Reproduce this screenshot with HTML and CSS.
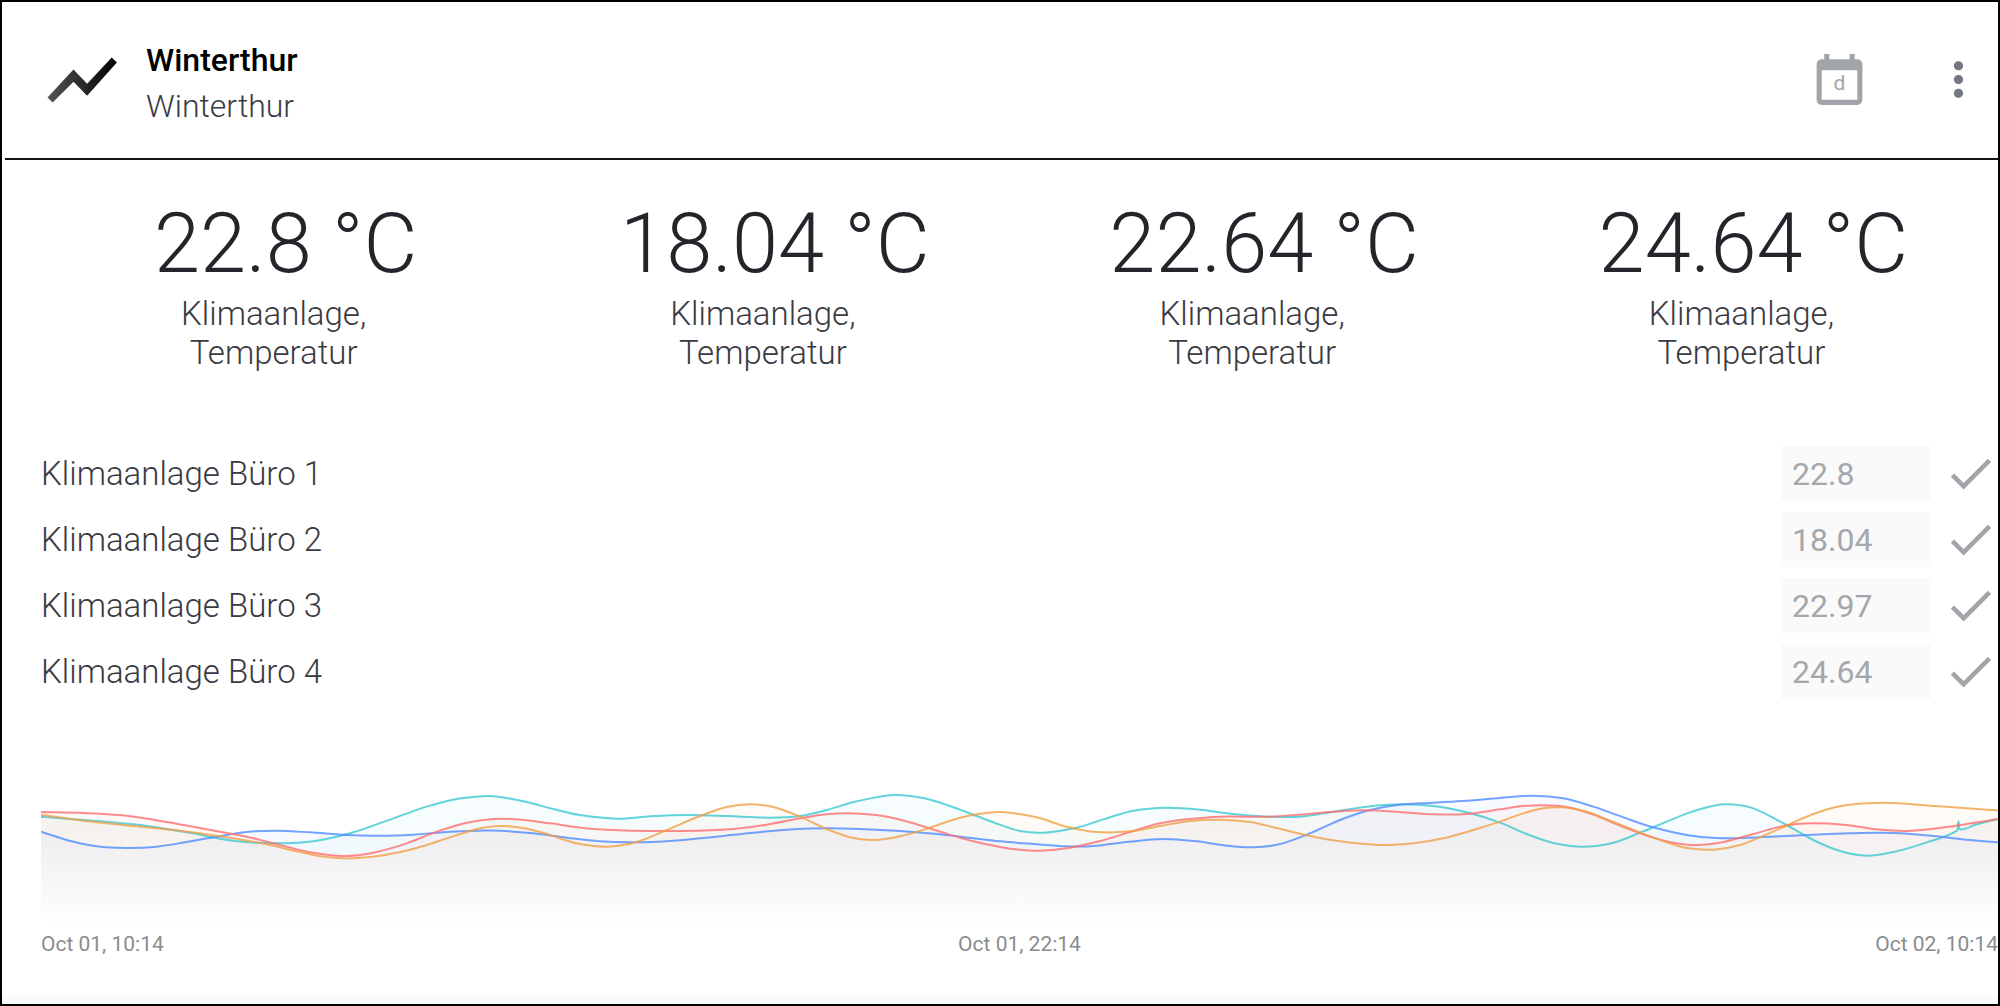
FILE: index.html
```html
<!DOCTYPE html>
<html lang="de">
<head>
    <meta charset="UTF-8">
    <meta name="viewport" content="width=device-width, initial-scale=1.0">
    <title>Winterthur</title>
    <link rel="stylesheet" href="styles.css">
</head>
<body>
    <div class="card">
        <header class="card-header">
            <svg class="icon-trend" viewBox="0 0 24 24" aria-hidden="true">
                <defs>
                    <linearGradient id="trendGradient" x1="0" y1="0" x2="1" y2="0">
                        <stop offset="0" stop-color="#555"/>
                        <stop offset="1" stop-color="#000"/>
                    </linearGradient>
                </defs>
                <path fill="url(#trendGradient)" d="M3.400 18.600l6.100-6.100 4 4.100L22.200 6.900l-1.500-1.500-7.200 7.700-4-4.200L1.900 17.100z"/>
            </svg>
            <div class="titles">
                <h1>Winterthur</h1>
                <p>Winterthur</p>
            </div>
            <button type="button" class="icon-button calendar" aria-label="Tag">
                <svg viewBox="0 0 24 24" aria-hidden="true">
                    <path d="M19 4h-1V2h-2v2H8V2H6v2H5c-1.11 0-1.99.9-1.99 2L3 20a2 2 0 002 2h14c1.1 0 2-.9 2-2V6c0-1.1-.9-2-2-2zm0 16H5V8.400h14V20z"/>
                </svg>
                <span class="calendar-unit">d</span>
            </button>
            <button type="button" class="icon-button more" aria-label="Menü">
                <svg viewBox="0 0 24 24" aria-hidden="true">
                    <path d="M12 8c1.100 0 2-.9 2-2s-.9-2-2-2-2 .9-2 2 .9 2 2 2zm0 2c-1.100 0-2 .9-2 2s.9 2 2 2 2-.9 2-2-.9-2-2-2zm0 6c-1.100 0-2 .9-2 2s.9 2 2 2 2-.9 2-2-.9-2-2-2z"/>
                </svg>
            </button>
        </header>

        <main class="card-body">
            <section class="values">
                <div class="value">
                    <strong>22.8 °C</strong>
                    <span>Klimaanlage,<br>Temperatur</span>
                </div>
                <div class="value">
                    <strong>18.04 °C</strong>
                    <span>Klimaanlage,<br>Temperatur</span>
                </div>
                <div class="value">
                    <strong>22.64 °C</strong>
                    <span>Klimaanlage,<br>Temperatur</span>
                </div>
                <div class="value">
                    <strong>24.64 °C</strong>
                    <span>Klimaanlage,<br>Temperatur</span>
                </div>
            </section>

            <form class="controls">
                <div class="control">
                    <label for="buero1">Klimaanlage Büro 1</label>
                    <input type="text" id="buero1" value="22.8">
                    <button type="button" class="icon-button check" aria-label="Büro 1 setzen">
                        <svg viewBox="0 0 24 24" aria-hidden="true"><path d="M9 16.170L4.830 12l-1.420 1.410L9 19 21 7l-1.410-1.410z"/></svg>
                    </button>
                </div>
                <div class="control">
                    <label for="buero2">Klimaanlage Büro 2</label>
                    <input type="text" id="buero2" value="18.04">
                    <button type="button" class="icon-button check" aria-label="Büro 2 setzen">
                        <svg viewBox="0 0 24 24" aria-hidden="true"><path d="M9 16.170L4.830 12l-1.420 1.410L9 19 21 7l-1.410-1.410z"/></svg>
                    </button>
                </div>
                <div class="control">
                    <label for="buero3">Klimaanlage Büro 3</label>
                    <input type="text" id="buero3" value="22.97">
                    <button type="button" class="icon-button check" aria-label="Büro 3 setzen">
                        <svg viewBox="0 0 24 24" aria-hidden="true"><path d="M9 16.170L4.830 12l-1.420 1.410L9 19 21 7l-1.410-1.410z"/></svg>
                    </button>
                </div>
                <div class="control">
                    <label for="buero4">Klimaanlage Büro 4</label>
                    <input type="text" id="buero4" value="24.64">
                    <button type="button" class="icon-button check" aria-label="Büro 4 setzen">
                        <svg viewBox="0 0 24 24" aria-hidden="true"><path d="M9 16.170L4.830 12l-1.420 1.410L9 19 21 7l-1.410-1.410z"/></svg>
                    </button>
                </div>
            </form>

            <section class="history">
                <svg id="chart" class="chart" viewBox="123 30 5871 408" preserveAspectRatio="none" role="img" aria-label="Temperaturverlauf"></svg>
                <div class="axis">
                    <span>Oct 01, 10:14</span>
                    <span>Oct 01, 22:14</span>
                    <span>Oct 02, 10:14</span>
                </div>
            </section>
        </main>
    </div>
    <script src="chart.js"></script>
</body>
</html>
```
FILE: styles.css
```css
* {
    box-sizing: border-box;
}
body {
    margin: 0;
    background: #fafafa;
    color: #3a3a42;
    font-family: Roboto, "Liberation Sans", sans-serif;
    font-size: 33px;
    font-weight: 300;
}
.card {
    display: flex;
    flex-direction: column;
    min-height: 100vh;
    border: 2px solid #000;
    padding-bottom: 9px;
}
.card-header {
    display: flex;
    align-items: center;
    height: 158px;
    margin-left: 3px;
    padding: 0 12px 1px 36px;
    background: #fff;
    border-bottom: 2px solid #15101a;
    box-shadow: -3px 0 #fff;
}
.icon-trend {
    width: 82px;
    height: 82px;
    margin-right: 23px;
}
.titles {
    flex: 1;
    padding-top: 6px;
    line-height: 46px;
}
.titles h1,
.titles p {
    margin: 0;
    font-size: 32px;
}
.titles h1 {
    color: #000;
    font-weight: 500;
}
.icon-button {
    position: relative;
    display: block;
    flex: none;
    padding: 0;
    border: none;
    background: none;
    font-family: inherit;
    cursor: pointer;
}
.icon-button svg {
    display: block;
    width: 100%;
    height: 100%;
    fill: currentColor;
}
.calendar {
    width: 61px;
    height: 61px;
    margin-right: 61px;
    color: #a1a4a9;
}
.calendar-unit {
    position: absolute;
    left: 0;
    right: 0;
    top: 22px;
    font-size: 21px;
    line-height: 24px;
    text-align: center;
}
.more {
    width: 55px;
    height: 55px;
    color: #737782;
}
.card-body {
    flex: 1;
    padding: 38px 0 0 39px;
    background: #fff;
}
.values {
    display: grid;
    grid-template-columns: repeat(4, 1fr);
    text-align: center;
}
.value strong {
    display: block;
    font-size: 83px;
    font-weight: 300;
    line-height: 92px;
    color: #24242b;
}
.value span {
    display: block;
    margin-top: 4px;
    padding-right: 24px;
    line-height: 39px;
}
.controls {
    display: flex;
    flex-direction: column;
    gap: 11px;
    margin-top: 74px;
}
.control {
    display: flex;
    align-items: center;
    gap: 12px;
}
.control label {
    flex: 1;
}
.control input {
    width: 150px;
    height: 55px;
    padding: 0 11px;
    border: none;
    background: #fafafa;
    color: #a5a7ac;
    font-family: inherit;
    font-size: 32px;
    font-weight: 400;
}
.check {
    width: 55px;
    height: 55px;
    color: #a1a4a9;
}
.history {
    margin-top: 91px;
}
.chart {
    display: block;
    width: 100%;
    height: 136px;
}
.series-line {
    fill: none;
    stroke-width: 2px;
    stroke-opacity: 0.8;
    vector-effect: non-scaling-stroke;
}
.axis {
    display: flex;
    justify-content: space-between;
    margin-top: 6px;
    font-size: 21px;
    font-weight: 400;
    line-height: 24px;
    color: #8a8c90;
}
```
FILE: chart.js
```js
const SVG_NS = 'http://www.w3.org/2000/svg';
const BASELINE = 438;

const series = [
    {
        name: 'teal',
        color: '#3cc8d2',
        points: [
            [123, 110], [280, 122], [420, 135], [560, 157], [700, 182], [830, 190], [950, 182], [1060, 157],
            [1180, 115], [1280, 80], [1370, 57], [1460, 48], [1500, 51], [1580, 66], [1660, 87], [1740, 105],
            [1850, 116], [1950, 109], [2060, 105], [2180, 108], [2310, 113], [2400, 108], [2480, 90], [2570, 64],
            [2680, 45], [2770, 54], [2850, 78], [2930, 108], [3000, 134], [3060, 153], [3130, 158], [3230, 143],
            [3310, 118], [3400, 92], [3500, 83], [3600, 89], [3700, 102], [3800, 110], [3900, 110], [4000, 95],
            [4100, 80], [4200, 73], [4300, 78], [4400, 97], [4500, 128], [4580, 162], [4660, 189], [4750, 200],
            [4840, 188], [4920, 158], [4980, 133], [5070, 97], [5140, 77], [5190, 73], [5260, 85], [5360, 135],
            [5440, 180], [5520, 213], [5600, 227], [5680, 216], [5780, 187], [5872, 151], [5875, 124], [5879, 148],
            [5930, 133], [5994, 117]
        ]
    },
    {
        name: 'blue',
        color: '#508cff',
        points: [
            [123, 155], [200, 180], [290, 199], [380, 204], [470, 200], [560, 186], [640, 172], [740, 156],
            [830, 152], [930, 157], [1040, 165], [1130, 167], [1240, 164], [1350, 155], [1440, 152], [1500, 152],
            [1600, 160], [1700, 173], [1800, 184], [1900, 187], [2020, 182], [2150, 170], [2260, 158], [2380, 148],
            [2480, 145], [2580, 147], [2700, 153], [2820, 163], [2920, 175], [3000, 184], [3100, 192], [3200, 199],
            [3280, 198], [3380, 186], [3490, 177], [3590, 184], [3680, 197], [3760, 202], [3840, 192], [3930, 160],
            [4020, 120], [4110, 90], [4200, 74], [4300, 68], [4400, 62], [4500, 54], [4600, 47], [4690, 55],
            [4780, 80], [4870, 112], [4960, 142], [5060, 165], [5150, 174], [5250, 173], [5400, 166], [5550, 160],
            [5680, 159], [5800, 168], [5900, 179], [5994, 187]
        ]
    },
    {
        name: 'red',
        color: '#ff6e6e',
        points: [
            [123, 96], [250, 99], [380, 107], [500, 126], [620, 148], [740, 170], [840, 195], [930, 217],
            [1030, 228], [1120, 218], [1220, 190], [1310, 155], [1400, 128], [1480, 117], [1550, 118], [1650, 130],
            [1770, 146], [1900, 152], [2040, 153], [2200, 147], [2300, 134], [2400, 115], [2480, 103], [2550, 100],
            [2650, 108], [2740, 130], [2830, 158], [2920, 184], [3000, 201], [3060, 209], [3120, 212], [3210, 203],
            [3300, 183], [3390, 156], [3470, 132], [3560, 118], [3660, 110], [3800, 110], [3900, 104], [4000, 95],
            [4100, 91], [4200, 96], [4300, 103], [4400, 102], [4500, 88], [4560, 79], [4630, 76], [4700, 81],
            [4780, 104], [4860, 137], [4940, 167], [5020, 188], [5090, 195], [5170, 186], [5260, 162], [5350, 138],
            [5430, 130], [5530, 134], [5630, 148], [5720, 153], [5810, 145], [5900, 132], [5994, 117]
        ]
    },
    {
        name: 'orange',
        color: '#f0a046',
        points: [
            [123, 104], [250, 122], [400, 138], [540, 152], [680, 172], [800, 193], [900, 216], [980, 231],
            [1060, 235], [1150, 226], [1250, 204], [1350, 172], [1440, 145], [1500, 138], [1570, 144], [1650, 165],
            [1730, 190], [1820, 200], [1910, 186], [2000, 150], [2100, 108], [2180, 81], [2250, 73], [2320, 81],
            [2400, 110], [2480, 147], [2560, 174], [2630, 180], [2700, 169], [2790, 143], [2880, 113], [2980, 97],
            [3030, 98], [3110, 112], [3200, 140], [3290, 156], [3390, 154], [3480, 138], [3570, 123], [3660, 119],
            [3750, 126], [3830, 144], [3920, 166], [4020, 184], [4140, 195], [4240, 190], [4330, 175], [4420, 150],
            [4500, 125], [4570, 100], [4630, 85], [4690, 82], [4760, 95], [4840, 126], [4920, 157], [5000, 187],
            [5060, 204], [5140, 209], [5220, 195], [5300, 163], [5370, 132], [5440, 102], [5520, 79], [5600, 70],
            [5680, 69], [5790, 77], [5900, 85], [5994, 91]
        ]
    }
];

// slope of the curve at a point, taken from its neighbours
function slope(points, i) {
    const a = points[Math.max(i - 1, 0)];
    const b = points[Math.min(i + 1, points.length - 1)];
    return (b[1] - a[1]) / (b[0] - a[0]);
}

function linePath(points) {
    let d = 'M' + points[0].join(' ');
    for (let i = 1; i < points.length; i++) {
        const [x0, y0] = points[i - 1];
        const [x1, y1] = points[i];
        const step = (x1 - x0) / 3;
        const c0 = y0 + slope(points, i - 1) * step;
        const c1 = y1 - slope(points, i) * step;
        d += ` C${x0 + step} ${c0} ${x1 - step} ${c1} ${x1} ${y1}`;
    }
    return d;
}

function areaPath(points) {
    const first = points[0][0];
    const last = points[points.length - 1][0];
    return `${linePath(points)} L${last} ${BASELINE} L${first} ${BASELINE} Z`;
}

function add(parent, tag, attributes) {
    const element = document.createElementNS(SVG_NS, tag);
    Object.entries(attributes).forEach(([key, value]) => element.setAttribute(key, value));
    parent.appendChild(element);
    return element;
}

const chart = document.getElementById('chart');

series.forEach(({ name, color, points }) => {
    const gradient = add(chart, 'linearGradient', {
        id: 'fill-' + name, gradientUnits: 'userSpaceOnUse', x1: 0, y1: 160, x2: 0, y2: BASELINE
    });
    add(gradient, 'stop', { offset: 0, 'stop-color': color, 'stop-opacity': 0.045 });
    add(gradient, 'stop', { offset: 1, 'stop-color': color, 'stop-opacity': 0 });
    add(chart, 'path', { d: areaPath(points), fill: `url(#fill-${name})` });
});

series.forEach(({ color, points }) => {
    add(chart, 'path', { d: linePath(points), class: 'series-line', stroke: color });
});
```
